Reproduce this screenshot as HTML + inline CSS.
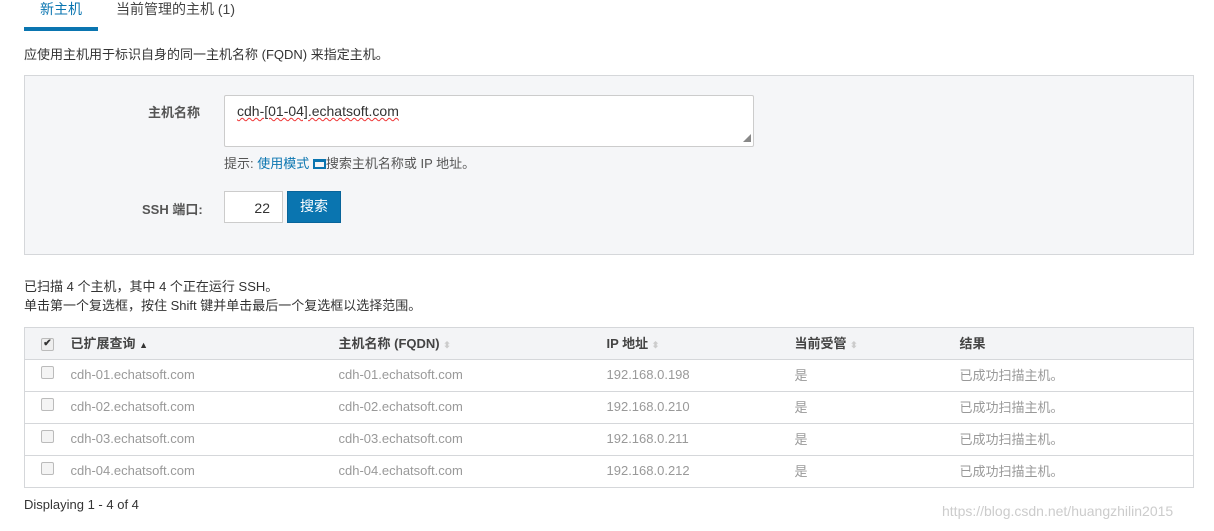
<!DOCTYPE html>
<html><head><meta charset="utf-8"><style>
body{margin:0;width:1214px;height:531px;background:#fff;font-family:"Liberation Sans","Noto Sans CJK SC",sans-serif;font-size:13px;color:#333;position:relative;overflow:hidden}
.a{position:absolute;white-space:nowrap}
.tab{top:0;font-size:14px}
.tabline{left:24px;top:27px;width:74px;height:4px;background:#0a75b0}
.panel{left:24px;top:75px;width:1168px;height:178px;background:#f5f6f8;border:1px solid #d5d7da}
.lbl{font-weight:bold;color:#555;font-size:13px}
.ta{left:224px;top:95px;width:528px;height:50px;background:#fff;border:1px solid #ccc;border-radius:2px}
.port{left:224px;top:191px;width:59px;height:32px;background:#fff;border:1px solid #ccc;text-align:right;box-sizing:border-box;padding:8px 12px 0 0;font-size:14px}
.btn{left:287px;top:191px;width:54px;height:32px;background:#0a75b0;border:1px solid #08649a;box-sizing:border-box;color:#fff;text-align:center;line-height:29px;font-size:14px}
table{position:absolute;left:24px;top:327px;width:1170px;border-collapse:collapse;font-size:13px}
td,th{height:32px;border-top:1px solid #d5d7da;text-align:left;padding:0 0 2px 0;color:#999;font-weight:normal;box-sizing:border-box}
th{background:#f3f4f6;color:#444;font-weight:bold;height:32px}
table{border:1px solid #d5d7da}
.cb{display:inline-block;width:11px;height:11px;border:1px solid #bbb;border-radius:2px;background:#f4f4f4;margin-left:16px;vertical-align:1px}
.sort{color:#ccc;font-size:9px}
</style></head><body>
<div class="a tab" style="left:40px;top:-1px;color:#0a75b0">新主机</div>
<div class="a tab" style="left:116px;top:-1px;color:#444">当前管理的主机 (1)</div>
<div class="a tabline"></div>
<div class="a" style="left:24px;top:44px">应使用主机用于标识自身的同一主机名称 (FQDN) 来指定主机。</div>
<div class="a panel"></div>
<div class="a lbl" style="left:148px;top:102px">主机名称</div>
<div class="a ta"><span class="a" style="left:12px;top:7px;font-size:14px;color:#333;text-decoration:underline wavy #e33;text-decoration-thickness:1px">cdh-[01-04].echatsoft.com</span><span class="a" style="right:2px;bottom:2px;font-size:8px;color:#888">◢</span></div>
<div class="a" style="left:224px;top:153px;color:#555">提示: <span style="color:#0a75b0">使用模式</span> <span style="display:inline-block;width:13px;height:10px;border:2px solid #0a75b0;border-top-width:3px;vertical-align:-1px;box-sizing:border-box"></span>搜索主机名称或 IP 地址。</div>
<div class="a lbl" style="left:142px;top:199px">SSH 端口:</div>
<div class="a port">22</div>
<div class="a btn">搜索</div>
<div class="a" style="left:24px;top:276px">已扫描 4 个主机，其中 4 个正在运行 SSH。</div>
<div class="a" style="left:24px;top:295px">单击第一个复选框，按住 Shift 键并单击最后一个复选框以选择范围。</div>
<table>
<tr><th style="width:46px"><span class="cb" style="background:#eee;text-align:center;font-size:10px;line-height:10px;color:#333">✔</span></th><th style="width:268px">已扩展查询 <span style="font-size:9px;color:#333">▲</span></th><th style="width:268px">主机名称 (FQDN) <span class="sort">⬍</span></th><th style="width:188px">IP 地址 <span class="sort">⬍</span></th><th style="width:165px">当前受管 <span class="sort">⬍</span></th><th>结果</th></tr>
<tr><td><span class="cb"></span></td><td>cdh-01.echatsoft.com</td><td>cdh-01.echatsoft.com</td><td>192.168.0.198</td><td>是</td><td>已成功扫描主机。</td></tr>
<tr><td><span class="cb"></span></td><td>cdh-02.echatsoft.com</td><td>cdh-02.echatsoft.com</td><td>192.168.0.210</td><td>是</td><td>已成功扫描主机。</td></tr>
<tr><td><span class="cb"></span></td><td>cdh-03.echatsoft.com</td><td>cdh-03.echatsoft.com</td><td>192.168.0.211</td><td>是</td><td>已成功扫描主机。</td></tr>
<tr><td><span class="cb"></span></td><td>cdh-04.echatsoft.com</td><td>cdh-04.echatsoft.com</td><td>192.168.0.212</td><td>是</td><td>已成功扫描主机。</td></tr>
</table>
<div class="a" style="left:24px;top:497px">Displaying 1 - 4 of 4</div>
<div class="a" style="left:942px;top:503px;color:#ccc;font-size:14px">https://blog.csdn.net/huangzhilin2015</div>
</body></html>
